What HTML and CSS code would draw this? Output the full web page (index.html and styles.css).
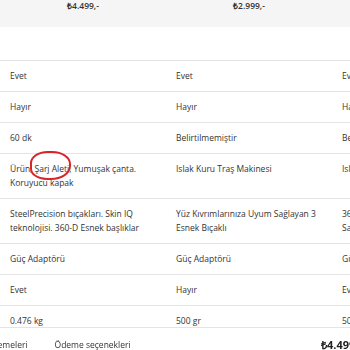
FILE: index.html
```html
<!DOCTYPE html>
<html lang="tr">
<head>
    <meta charset="UTF-8">
    <meta name="viewport" content="width=device-width, initial-scale=1.0">
    <title>Ürün Karşılaştırma</title>
    <link rel="stylesheet" href="styles.css">
</head>
<body>
    <div class="compare">
        <div class="row price-row">
            <div class="price">₺4.499,-</div>
            <div class="price">₺2.999,-</div>
            <div class="price">₺4.499,-</div>
        </div>

        <div class="row spec-row">
            <div class="cell">Evet</div>
            <div class="cell">Evet</div>
            <div class="cell">Evet</div>
        </div>
        <div class="row spec-row">
            <div class="cell">Hayır</div>
            <div class="cell">Hayır</div>
            <div class="cell">Hayır</div>
        </div>
        <div class="row spec-row">
            <div class="cell">60 dk</div>
            <div class="cell">Belirtilmemiştir</div>
            <div class="cell">Belirtilmemiştir</div>
        </div>
        <div class="row spec-row">
            <div class="cell">Ürün, <span class="mark">Şarj Aleti</span>, Yumuşak çanta. Koruyucu kapak</div>
            <div class="cell">Islak Kuru Traş Makinesi</div>
            <div class="cell">Islak Kuru Traş Makinesi</div>
        </div>
        <div class="row spec-row">
            <div class="cell">SteelPrecision bıçakları. Skin IQ teknolojisi. 360-D Esnek başlıklar</div>
            <div class="cell">Yüz Kıvrımlarınıza Uyum Sağlayan 3 Esnek Bıçaklı</div>
            <div class="cell">36 Kendiliğinden Bilenen Çelik Bıçak, Sakal Şekillendirici</div>
        </div>
        <div class="row spec-row">
            <div class="cell">Güç Adaptörü</div>
            <div class="cell">Güç Adaptörü</div>
            <div class="cell">Güç Adaptörü</div>
        </div>
        <div class="row spec-row">
            <div class="cell">Evet</div>
            <div class="cell">Hayır</div>
            <div class="cell">Evet</div>
        </div>
        <div class="row spec-row">
            <div class="cell">0.476 kg</div>
            <div class="cell">500 gr</div>
            <div class="cell">500 gr</div>
        </div>
    </div>

    <div class="bottom-bar">
        <div class="tabs">
            <span class="tab">İncelemeleri</span>
            <span class="tab">Ödeme seçenekleri</span>
        </div>
        <div class="total">₺4.499,-</div>
    </div>
</body>
</html>
```

FILE: styles.css
```css
* {
    box-sizing: border-box;
}
body {
    margin: 0;
    font-family: "Open Sans", sans-serif;
    font-size: 8.5px;
    color: #333;
    background: #fff;
    overflow: hidden;
}
.compare {
    width: 498px;
}
.row {
    display: grid;
    grid-template-columns: repeat(3, 166px);
}
.price-row {
    height: 27px;
    margin-bottom: 33px;
    background: #f5f5f5;
}
.price {
    text-align: center;
    font-weight: 600;
    line-height: 12px;
}
.spec-row {
    border-top: 1px solid #e4e4e4;
}
.cell {
    padding: 8px 10px;
    line-height: 14px;
}
.mark {
    position: relative;
}
.mark::after {
    content: "";
    position: absolute;
    left: -5px;
    right: -2px;
    top: -12px;
    bottom: -6px;
    border: 2px solid #d7262b;
    border-radius: 42% 45% 48% 40%;
}
.bottom-bar {
    position: fixed;
    left: 0;
    right: 0;
    bottom: 0;
    height: 34px;
    margin-bottom: -11px;
    padding: 10px 0 10px;
    display: flex;
    justify-content: space-between;
    background: #fff;
    border-top: 1px solid #e4e4e4;
    line-height: 13px;
}
.tabs {
    display: flex;
    gap: 27px;
    margin-left: -21px;
}
.total {
    width: 29px;
    overflow: hidden;
    white-space: nowrap;
    font-size: 11px;
    font-weight: 700;
    color: #222;
}
```
